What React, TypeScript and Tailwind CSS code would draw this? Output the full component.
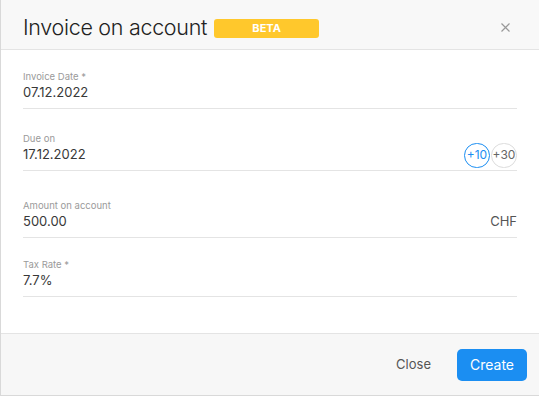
import React from "react"

type Field = {
  label: string
  value: string
  gap: string
  extra?: React.ReactNode
}

function CloseIcon() {
  return (
    <svg width="9" height="9" viewBox="0 0 9 9" fill="none">
      <path d="M0.5 0.5L8.5 8.5M8.5 0.5L0.5 8.5" stroke="#999" strokeWidth="1.2" />
    </svg>
  )
}

export default function App() {
  const fields: Field[] = [
    { label: "Invoice Date *", value: "07.12.2022", gap: "mt-0" },
    {
      label: "Due on",
      value: "17.12.2022",
      gap: "mt-[24px]",
      extra: (
        <div className="flex items-center gap-[1px]">
          <span className="flex h-[25px] w-[26px] items-center justify-center rounded-full border border-[#1b8ef2] text-[12px] text-[#1b8ef2]">
            +10
          </span>
          <span className="flex h-[25px] w-[26px] items-center justify-center rounded-full border border-[#dcdcdc] text-[12px] text-[#666]">
            +30
          </span>
        </div>
      ),
    },
    {
      label: "Amount on account",
      value: "500.00",
      gap: "mt-[29px]",
      extra: <span className="text-[13px] text-[#555]">CHF</span>,
    },
    { label: "Tax Rate *", value: "7.7%", gap: "mt-[21px]" },
  ]

  return (
    <div
      className="flex h-[396px] w-[539px] flex-col border-b border-l border-[#d9d9d9] bg-white text-[#333]"
      style={{ fontFamily: "Inter, 'Noto Sans', sans-serif" }}
    >
      {/* Header */}
      <div className="flex h-[50px] shrink-0 items-center border-b border-[#e4e4e4] bg-[#f8f8f8] pl-[22px] pr-[24px] pt-[6px]">
        <h1 className="text-[21.5px] font-light leading-none tracking-[-0.3px] text-[#222]">Invoice on account</h1>
        <span className="ml-[7px] mt-[1px] flex h-[19px] w-[105px] items-center justify-center rounded-[3px] bg-[#ffc82c] text-[11px] font-bold text-white">
          BETA
        </span>
        <button className="ml-auto flex h-[20px] w-[20px] items-center justify-center">
          <CloseIcon />
        </button>
      </div>

      {/* Fields */}
      <div className="flex-1 px-[22px] pt-[21px]">
        {fields.map((f) => (
          <div key={f.label} className={`${f.gap} border-b border-[#e4e4e4] pb-[5px]`}>
            <div className="h-[12px] text-[9.5px] leading-[12px] text-[#9a9a9a]">{f.label}</div>
            <div className="flex h-[20px] items-center justify-between">
              <span className="text-[13px] text-[#383838]">{f.value}</span>
              {f.extra}
            </div>
          </div>
        ))}
      </div>

      {/* Footer */}
      <div className="flex h-[62px] shrink-0 items-center justify-end gap-[10px] border-t border-[#e4e4e4] bg-[#f7f7f7] pr-[12px]">
        <button className="h-[32px] px-[16px] text-[13px] text-[#555]">Close</button>
        <button className="h-[32px] w-[70px] rounded-[5px] bg-[#1b8ef2] text-[14px] text-white">Create</button>
      </div>
    </div>
  )
}
